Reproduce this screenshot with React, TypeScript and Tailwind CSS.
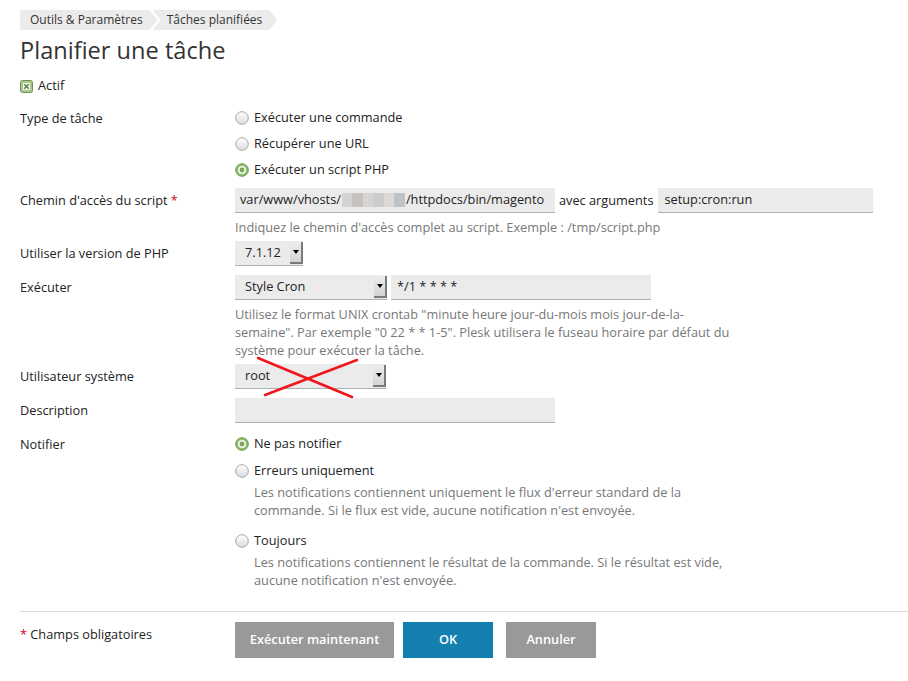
import React from 'react';

const FONT = { fontFamily: '"Open Sans", "Noto Sans", sans-serif' };

function Radio({ checked = false }: { checked?: boolean }) {
  return (
    <svg width="14" height="14" viewBox="0 0 14 14" className="shrink-0">
      <defs>
        <linearGradient id="rg0" x1="0" y1="0" x2="0" y2="1">
          <stop offset="0" stopColor="#ffffff" />
          <stop offset="1" stopColor="#dcdcdc" />
        </linearGradient>
      </defs>
      {checked ? (
        <>
          <circle cx="7" cy="7" r="6.3" fill="#8fbf6a" stroke="#6e9a4d" strokeWidth="1" />
          <circle cx="7" cy="7" r="4" fill="#f4f4f4" />
          <circle cx="7" cy="7" r="2.4" fill="#7aa854" />
        </>
      ) : (
        <circle cx="7" cy="7" r="6.3" fill="url(#rg0)" stroke="#a6a6a6" strokeWidth="1" />
      )}
    </svg>
  );
}

function RadioLine({ label, checked }: { label: string; checked?: boolean }) {
  return (
    <div className="flex items-center h-[18px] gap-[5px] text-[12.75px] text-[#222]">
      <Radio checked={checked} />
      <span>{label}</span>
    </div>
  );
}

function Select({ value, width }: { value: string; width: string }) {
  return (
    <div className={`relative flex items-center h-[25px] bg-[#ebebeb] border-b border-[#a9b1b7] ${width}`}>
      <span className="pl-[10px] text-[12.75px] text-[#222]">{value}</span>
      <div className="absolute right-0 top-[1px] bottom-[1px] w-[13px] bg-gradient-to-b from-[#ececec] to-[#d4d4d4] border-r-2 border-b-2 border-[#7a7a7a] flex items-center justify-center">
        <div className="w-0 h-0 border-l-[3px] border-r-[3px] border-t-[4px] border-l-transparent border-r-transparent border-t-black" />
      </div>
    </div>
  );
}

function Label({ children }: { children: React.ReactNode }) {
  return <div className="w-[215px] shrink-0 text-[12.75px] text-[#222]">{children}</div>;
}

export default function App() {
  return (
    <div style={FONT} className="relative w-[908px] h-[681px] bg-white pt-[10px] overflow-hidden">
      {/* Breadcrumb */}
      <div className="flex pl-[20px] h-[20px] text-[12px] text-[#333]">
        <div className="bg-[#ebebeb] h-[20px] flex items-center pl-[10px] pr-[15px] [clip-path:polygon(0_0,calc(100%_-_8px)_0,100%_50%,calc(100%_-_8px)_100%,0_100%)]">
          Outils &amp; Paramètres
        </div>
        <div className="-ml-[5px] bg-[#ebebeb] h-[20px] flex items-center pl-[14px] pr-[15px] [clip-path:polygon(0_0,calc(100%_-_8px)_0,100%_50%,calc(100%_-_8px)_100%,0_100%,8px_50%)]">
          Tâches planifiées
        </div>
      </div>

      {/* Title */}
      <h1 className="pl-[20px] mt-[4px] text-[23.6px] leading-[32px] text-[#333]">Planifier une tâche</h1>

      {/* Actif */}
      <div className="pl-[20px] mt-[11px] flex items-center h-[18px] gap-[5px] text-[12.75px] text-[#222]">
        <svg width="13" height="13" viewBox="0 0 13 13">
          <rect x="0.5" y="0.5" width="12" height="12" rx="2" fill="#a9c98c" stroke="#6f9152" />
          <rect x="3" y="3" width="7" height="7" fill="#f3f3f3" />
          <path d="M4.3 4.3 L8.7 8.7 M8.7 4.3 L4.3 8.7" stroke="#5d7f40" strokeWidth="1.4" />
        </svg>
        <span>Actif</span>
      </div>

      <div className="pl-[20px]">
        {/* Type de tâche */}
        <div className="flex mt-[14px]">
          <Label>Type de tâche</Label>
          <div className="flex flex-col gap-[8px]">
            <RadioLine label="Exécuter une commande" />
            <RadioLine label="Récupérer une URL" />
            <RadioLine label="Exécuter un script PHP" checked />
          </div>
        </div>

        {/* Chemin */}
        <div className="flex items-center mt-[9px]">
          <Label>
            Chemin d'accès du script <span className="text-[#d0021b]">*</span>
          </Label>
          <div className="flex items-center h-[25px] w-[320px] bg-[#ebebeb] border-b border-[#a9b1b7] text-[12.75px] text-[#222] overflow-hidden whitespace-nowrap pl-[5px]">
            <span>var/www/vhosts/</span>
            <span className="flex h-[14px] w-[63px] mx-[1px]">
              <span className="flex-1 bg-[#d3d3d3]" />
              <span className="flex-1 bg-[#c6c2c0]" />
              <span className="flex-1 bg-[#d7d4d2]" />
              <span className="flex-1 bg-[#cbcccc]" />
              <span className="flex-1 bg-[#dcd8d6]" />
              <span className="flex-1 bg-[#bfc3c9]" />
            </span>
            <span>/httpdocs/bin/magento</span>
          </div>
          <span className="ml-[4px] mr-[5px] text-[12.75px] text-[#222]">avec arguments</span>
          <div className="flex items-center h-[25px] w-[215px] bg-[#ebebeb] border-b border-[#a9b1b7] text-[12.75px] text-[#222] pl-[6px]">
            setup:cron:run
          </div>
        </div>
        <div className="ml-[215px] mt-[5px] h-[18px] leading-[18px] text-[12.75px] text-[#777]">
          Indiquez le chemin d'accès complet au script. Exemple : /tmp/script.php
        </div>

        {/* PHP version */}
        <div className="flex items-center mt-[5px]">
          <Label>Utiliser la version de PHP</Label>
          <Select value="7.1.12" width="w-[68px]" />
        </div>

        {/* Exécuter */}
        <div className="flex items-center mt-[9px]">
          <Label>Exécuter</Label>
          <Select value="Style Cron" width="w-[152px]" />
          <div className="ml-[4px] flex items-center h-[25px] w-[260px] bg-[#ebebeb] border-b border-[#a9b1b7] text-[12.75px] text-[#222] pl-[6px]">
            */1 * * * *
          </div>
        </div>
        <div className="ml-[215px] mt-[5px] w-[502px] leading-[18px] text-[12.75px] text-[#777]">
          Utilisez le format UNIX crontab "minute heure jour-du-mois mois jour-de-la-semaine". Par exemple "0 22 * * 1-5". Plesk utilisera le fuseau horaire par défaut du système pour exécuter la tâche.
        </div>

        {/* Utilisateur */}
        <div className="flex items-center mt-[5px]">
          <Label>Utilisateur système</Label>
          <Select value="root" width="w-[151px]" />
        </div>

        {/* Description */}
        <div className="flex items-center mt-[9px]">
          <Label>Description</Label>
          <div className="h-[25px] w-[320px] bg-[#ebebeb] border-b border-[#a9b1b7]" />
        </div>

        {/* Notifier */}
        <div className="flex mt-[12px]">
          <Label>Notifier</Label>
          <div className="flex flex-col">
            <RadioLine label="Ne pas notifier" checked />
            <div className="mt-[9px]">
              <RadioLine label="Erreurs uniquement" />
            </div>
            <div className="ml-[19px] mt-[3px] w-[470px] leading-[18px] text-[12.75px] text-[#777]">
              Les notifications contiennent uniquement le flux d'erreur standard de la commande. Si le flux est vide, aucune notification n'est envoyée.
            </div>
            <div className="mt-[13px]">
              <RadioLine label="Toujours" />
            </div>
            <div className="ml-[19px] mt-[3px] w-[480px] leading-[18px] text-[12.75px] text-[#777]">
              Les notifications contiennent le résultat de la commande. Si le résultat est vide, aucune notification n'est envoyée.
            </div>
          </div>
        </div>
      </div>

      {/* Footer */}
      <div className="ml-[20px] mt-[22px] border-t border-[#dddddd]" />
      <div className="flex pl-[20px] mt-[10px]">
        <div className="w-[215px] text-[12.75px] text-[#222] pt-[3px]">
          <span className="text-[#d0021b]">*</span> Champs obligatoires
        </div>
        <div className="flex gap-[9px]">
          <button className="h-[36px] w-[159px] bg-[#999999] text-white text-[12.75px] font-semibold">Exécuter maintenant</button>
          <button className="h-[36px] w-[90px] bg-[#1380b0] text-white text-[12.75px] font-semibold">OK</button>
          <button className="ml-[4px] h-[36px] w-[90px] bg-[#999999] text-white text-[12.75px] font-semibold">Annuler</button>
        </div>
      </div>

      {/* Red cross drawn over the system user select */}
      <svg className="absolute left-[256px] top-[355px] pointer-events-none" width="106" height="46" viewBox="0 0 106 46">
        <path d="M2 3 L96 42 M101 5 L9 40" stroke="#f0161c" strokeWidth="2.6" fill="none" strokeLinecap="round" />
      </svg>
    </div>
  );
}
